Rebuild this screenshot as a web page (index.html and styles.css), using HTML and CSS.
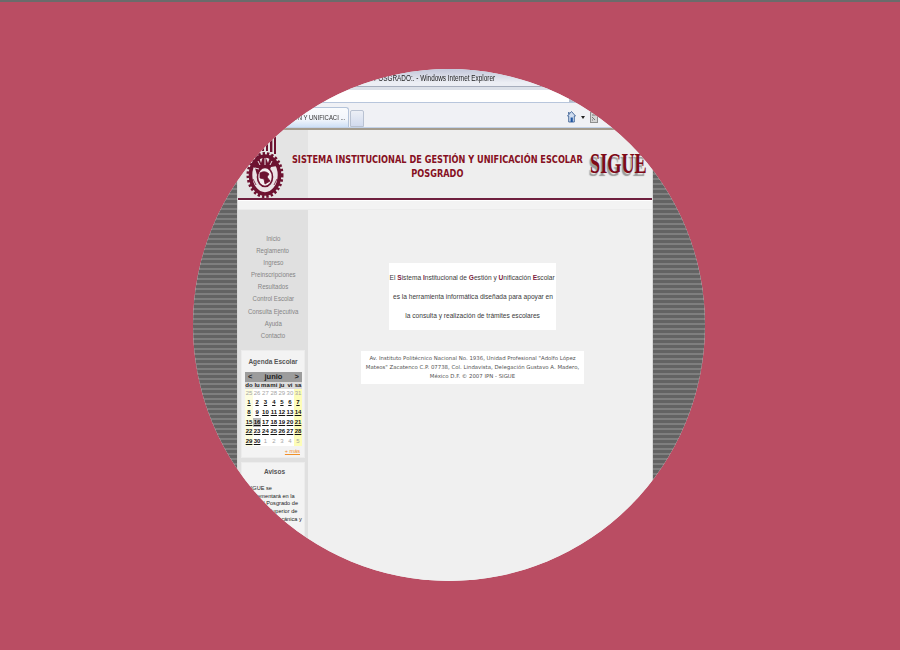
FILE: index.html
```html
<!DOCTYPE html>
<html lang="es">
<head>
<meta charset="utf-8">
<title>SIGUE</title>
<link rel="stylesheet" href="styles.css">
</head>
<body>
<main class="stage">
  <div class="lens">
    <div class="shot">
      <div class="titlebar"><span>:: SIGUE :: POSGRADO:. - Windows Internet Explorer</span></div>
      <div class="addressbar"><div class="addressfield"></div><div class="gobutton"></div></div>
      <div class="toolbar">
        <div class="tab"><span>:: GESTIÓN Y UNIFICACI ...</span></div>
        <div class="newtab"></div>
        <div class="tools">
          <svg class="home" viewBox="0 0 9 12" width="9" height="12"><path d="M4.5 0.5 0.5 5h1.2v6h5.6V5h1.2z" fill="#cfdcef" stroke="#3f6396" stroke-width="0.9"/><rect x="3.6" y="6.5" width="2.2" height="4.5" fill="#1f55a3"/><rect x="1" y="1" width="1.6" height="2.4" fill="#5f7da8"/></svg>
          <i class="caret"></i>
          <svg class="feed" viewBox="0 0 8 11" width="8" height="11"><rect x="0.5" y="0.5" width="7" height="10" fill="#d5d5d5" stroke="#8f8f8f"/><path d="M2 3h4M2 5l3 3M2 8h1" stroke="#777" fill="none"/></svg>
        </div>
      </div>
      <div class="chromeline"></div>
      <div class="desktop">
        <div class="gutter gutter-left"></div>
        <div class="site">
          <header class="sitehead">
            <div class="logocell">
              <svg class="logo" viewBox="0 0 38 63" width="38" height="63" aria-label="Escudo IPN">
                <g fill="#6d1230">
                  <rect x="12" y="0" width="2" height="16"/><rect x="16" y="4" width="2" height="12"/><rect x="20" y="1" width="2" height="15"/><rect x="24" y="0" width="2.4" height="17"/><rect x="28" y="2" width="2" height="17"/>
                </g>
                <ellipse cx="19" cy="40" rx="17" ry="21.5" fill="none" stroke="#6d1230" stroke-width="3" stroke-dasharray="2.4 2"/>
                <ellipse cx="19" cy="40" rx="14.5" ry="19" fill="#ebe2e5" stroke="#6d1230" stroke-width="3.6"/>
                <path d="M6 31 12 19l3 9 3-10 4 10 3-9 6 12-6 1-2 5-7-1-5 4-2-7z" fill="#6d1230"/>
                <path d="M12 26l2 4M19 23v7M26 26l-2 4M9 33l4 1" stroke="#ebe2e5" stroke-width="1" fill="none"/>
                <ellipse cx="19" cy="42" rx="7.5" ry="9.5" fill="#f4eef0" stroke="#6d1230" stroke-width="1.6"/>
                <path d="M14 38q5-3 9 1l-2 3 3 4-5 3-1-5-4-1zM7 44l3 6M31 44l-3 6" fill="#6d1230" stroke="#6d1230" stroke-width=".8"/>
              </svg>
            </div>
            <div class="headtitle">
              <h1>SISTEMA INSTITUCIONAL DE GESTIÓN Y UNIFICACIÓN ESCOLAR<br>POSGRADO</h1>
            </div>
            <div class="brand"><span>SIGUE</span></div>
          </header>
          <div class="headband"></div>
          <div class="sitebody">
            <aside class="side">
              <nav class="menu">
                <a>Inicio</a><a>Reglamento</a><a>Ingreso</a><a>Preinscripciones</a><a>Resultados</a><a>Control Escolar</a><a>Consulta Ejecutiva</a><a>Ayuda</a><a>Contacto</a>
              </nav>
              <section class="card agenda">
                <h2>Agenda Escolar</h2>
                <div class="cal">
                  <div class="calhead"><b>&lt;</b><b>junio</b><b>&gt;</b></div>
                  <div class="calgrid">
                    <b class="wd">do</b><b class="wd">lu</b><b class="wd">ma</b><b class="wd">mi</b><b class="wd">ju</b><b class="wd">vi</b><b class="wd">sa</b>
                    <span class="o we">25</span><span class="o">26</span><span class="o">27</span><span class="o">28</span><span class="o">29</span><span class="o">30</span><span class="o sa">31</span>
                    <span class="d we">1</span><span class="d">2</span><span class="d">3</span><span class="d">4</span><span class="d">5</span><span class="d">6</span><span class="d sa">7</span>
                    <span class="d we">8</span><span class="d">9</span><span class="d">10</span><span class="d">11</span><span class="d">12</span><span class="d">13</span><span class="d sa">14</span>
                    <span class="d we">15</span><span class="d today">16</span><span class="d">17</span><span class="d">18</span><span class="d">19</span><span class="d">20</span><span class="d sa">21</span>
                    <span class="d we">22</span><span class="d">23</span><span class="d">24</span><span class="d">25</span><span class="d">26</span><span class="d">27</span><span class="d sa">28</span>
                    <span class="d we">29</span><span class="d">30</span><span class="o">1</span><span class="o">2</span><span class="o">3</span><span class="o">4</span><span class="o sa">5</span>
                  </div>
                </div>
                <a class="more">+ más</a>
              </section>
              <section class="card avisos">
                <h2>Avisos</h2>
                <p>SIGUE se<br>implementará en la<br>Unidad Posgrado de<br>Escuela Superior de<br>Ingeniería Mecánica y<br>Eléctrica</p>
              </section>
            </aside>
            <div class="content">
              <div class="intro">
                <p>El <b>S</b>istema <b>I</b>nstitucional de <b>G</b>estión y <b>U</b>nificación <b>E</b>scolar</p>
                <p>es la herramienta informática diseñada para apoyar en</p>
                <p>la consulta y realización de trámites escolares</p>
              </div>
              <div class="address">Av. Instituto Politécnico Nacional No. 1936, Unidad Profesional "Adolfo López<br>Mateos" Zacatenco C.P. 07738, Col. Lindavista, Delegación Gustavo A. Madero,<br>México D.F. © 2007 IPN - SIGUE</div>
            </div>
          </div>
        </div>
        <div class="gutter"></div>
      </div>
    </div>
  </div>
</main>
</body>
</html>
```
FILE: styles.css
```css
* { box-sizing: border-box; }
html, body { margin: 0; height: 100%; }
body { background: #ba4d63; font-family: "Liberation Sans", Arial, sans-serif; }

.stage {
  width: 900px;
  height: 650px;
  display: flex;
  align-items: center;
  justify-content: center;
  padding-right: 2px;
  background: #ba4d63;
  box-shadow: inset 0 2px 0 #6b6b6b;
}
.lens {
  width: 512px;
  height: 512px;
  border-radius: 50%;
  overflow: hidden;
  flex: none;
  background: #f0f0f0;
}
.shot {
  width: 512px;
  height: 512px;
  display: flex;
  flex-direction: column;
  filter: blur(0.35px);
}

.titlebar {
  height: 18px;
  background: linear-gradient(#c3c7da, #eceef4 80%);
  border-bottom: 1px solid #a7aebd;
  display: flex;
  justify-content: flex-end;
  align-items: center;
  flex: none;
  padding-right: 210px;
}
.titlebar span {
  font-size: 9px;
  color: #222;
  white-space: nowrap;
  transform: scaleX(.71);
  transform-origin: right center;
  display: inline-block;
  flex: none;
}

.addressbar {
  height: 16px;
  flex: none;
  background: #dde1e9;
  padding-top: 3px;
  display: flex;
  border-bottom: 1px solid #b8c6dc;
}
.addressfield { flex: 1; background: #fff; }
.gobutton { width: 136px; background: #fff; position: relative; }
.gobutton::after { content: ""; position: absolute; left: 0; bottom: 0; width: 6px; height: 3px; background: #b7c0ce; }

.toolbar {
  height: 24px;
  flex: none;
  background: #f0f1f5;
  display: flex;
  align-items: flex-end;
  padding-left: 36px;
  gap: 1px;
}
.tab {
  width: 120px;
  height: 20px;
  border: 1px solid #b5c4da;
  border-bottom: 0;
  border-radius: 3px 3px 0 0;
  background: linear-gradient(#fafbfd, #f2f6fc 60%, #cfe0f6);
  display: flex;
  align-items: center;
  justify-content: flex-end;
  padding-right: 3px;
  overflow: hidden;
}
.tab span { font-size: 7px; color: #333; white-space: nowrap; flex: none; transform: scaleX(.85); transform-origin: right center; }
.newtab {
  width: 14px;
  height: 17px;
  border: 1px solid #b9c2d2;
  border-radius: 2px 2px 0 0;
  background: linear-gradient(#eceff6, #d2dbee);
}
.tools {
  margin-left: auto;
  margin-right: 107px;
  align-self: center;
  display: flex;
  align-items: center;
  gap: 3px;
  padding-top: 4px;
}
.caret { width: 0; height: 0; border: 2px solid transparent; border-top: 3px solid #222; border-bottom: 0; margin: 0 2px; }

.chromeline {
  height: 3px;
  flex: none;
  background: linear-gradient(#c3d2e8, #c3d2e8 34%, #a49c8e 34%);
}

.desktop { flex: 1; display: flex; min-height: 0; }
.gutter {
  flex: 1;
  background: repeating-linear-gradient(#636363 0 3px, #7f7f7f 3px 5px);
}
.gutter-left { flex: none; width: 44px; }
.site {
  width: 416px;
  flex: none;
  display: flex;
  flex-direction: column;
  background: #f0f0f0;
  border: solid #d9d9d9;
  border-width: 0 1px;
}

.sitehead {
  height: 70px;
  flex: none;
  display: flex;
  background: #eeeeee;
  border-bottom: 2px solid #6e1f3e;
}
.logocell {
  width: 70px;
  flex: none;
  background: #e4e4e4;
  padding: 5px 0 0 8px;
}
.logo { display: block; }
.headtitle {
  width: 282px;
  flex: none;
  padding-top: 23px;
  display: flex;
  justify-content: center;
}
.headtitle h1 {
  margin: 0 0 0 -23px;
  flex: none;
  font: bold 10px/14px "DejaVu Sans", Verdana, sans-serif;
  color: #861022;
  text-align: center;
  white-space: nowrap;
  transform: scaleX(.82);
}
.brand { flex: 1; padding: 17px 0 0 0; overflow: visible; }
.brand span {
  display: inline-block;
  font: bold 24px/26px "Liberation Serif", "Times New Roman", serif;
  color: #7e0a18;
  text-shadow: -2px 2px 1px #999;
  transform: scale(.76, 1.25);
  transform-origin: left top;
}

.headband { height: 10px; flex: none; background: #f3f3f3; border-top: 1px solid #fff; border-bottom: 1px solid #ececec; }

.sitebody { flex: 1; display: flex; min-height: 0; }
.side {
  width: 70px;
  flex: none;
  background: #e0e0e0;
  padding: 23px 3px 0;
  display: flex;
  flex-direction: column;
  align-items: stretch;
}
.menu { display: flex; flex-direction: column; align-items: center; margin-bottom: 8px; }
.menu a {
  font-size: 8px;
  line-height: 12.1px;
  color: #858585;
  white-space: nowrap;
  transform: scaleX(.76);
}
.card { background: #f3f3f3; border: 1px solid #ececec; flex: none; }
.card h2 { margin: 0; font-size: 6.5px; font-weight: bold; text-align: center; color: #555; }
.agenda { height: 108px; padding: 6px 3px 0; margin-bottom: 4px; }
.agenda h2 { line-height: 10px; margin-bottom: 5px; }
.cal { width: 57px; }
.calhead {
  height: 10px;
  background: #9c9c9c;
  display: flex;
  justify-content: space-between;
  align-items: center;
  padding: 0 3px;
  font-size: 7.5px;
  color: #222;
}
.calgrid {
  display: grid;
  grid-template-columns: repeat(7, 1fr);
  grid-template-rows: 7px;
  grid-auto-rows: 9.6px;
}
.calgrid > * { font-size: 6px; line-height: 9.6px; text-align: center; }
.calgrid .wd { line-height: 7px; background: #dcdcdc; color: #222; }
.o { color: #a5a5a5; background: #fff; }
.d { color: #111; background: #fff; font-weight: bold; text-decoration: underline; }
.calgrid .we { background: #fdfde0; }
.calgrid .sa { background: #fdfdb8; }
.calgrid .today { background: #bbbbbb; }
.more { display: block; text-align: right; font-size: 5.5px; line-height: 8px; color: #f0902a; text-decoration: underline; margin-top: 1px; padding-right: 1px; }
.avisos { flex: 1; padding: 5px 2px 0 5px; }
.avisos h2 { line-height: 8px; margin-bottom: 9px; }
.avisos p { margin: 0; font-size: 5.6px; line-height: 7.8px; color: #222; white-space: nowrap; }

.content {
  flex: 1;
  padding: 53px 15px 0 0;
  display: flex;
  flex-direction: column;
  align-items: center;
  gap: 21px;
  background: #f0f0f0;
}
.intro {
  width: 167px;
  height: 67px;
  background: #fff;
  padding-top: 10px;
  display: flex;
  flex-direction: column;
  align-items: center;
  gap: 9px;
}
.intro p { margin: 0; flex: none; font-size: 8px; line-height: 10px; text-align: center; color: #3a3a3a; white-space: nowrap; transform: scaleX(.825); }
.intro b { color: #7e1a3e; }
.address {
  width: 223px;
  height: 33px;
  background: #fff;
  padding: 3px 0 0;
  font: 5.4px/8.9px "DejaVu Sans", Verdana, sans-serif;
  color: #555;
  text-align: center;
  white-space: nowrap;
}
```
